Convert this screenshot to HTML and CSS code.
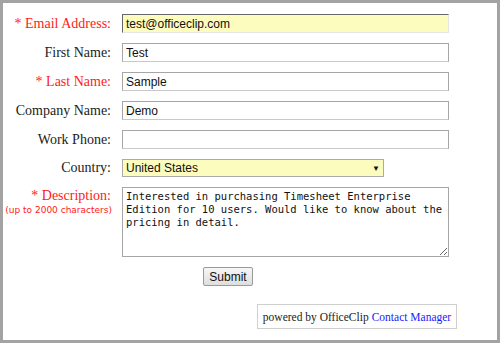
FILE: index.html
```html
<!DOCTYPE html>
<html>
<head>
<meta charset="utf-8">
<link rel="stylesheet" href="styles.css">
</head>
<body>
<div class="frame">
  <form class="form">
    <label class="lbl req">* Email Address:</label>
    <div class="field"><input class="inp yellow" type="text" value="test@officeclip.com"></div>

    <label class="lbl">First Name:</label>
    <div class="field"><input class="inp" type="text" value="Test"></div>

    <label class="lbl req">* Last Name:</label>
    <div class="field"><input class="inp" type="text" value="Sample"></div>

    <label class="lbl">Company Name:</label>
    <div class="field"><input class="inp" type="text" value="Demo"></div>

    <label class="lbl">Work Phone:</label>
    <div class="field"><input class="inp" type="text" value=""></div>

    <label class="lbl">Country:</label>
    <div class="field"><div class="select"><span>United States</span><span class="arrow">▼</span></div></div>

    <div class="lbl req top">* Description:<div class="hint">(up to 2000 characters)</div></div>
    <div class="field"><textarea class="ta">Interested in purchasing Timesheet Enterprise Edition for 10 users. Would like to know about the pricing in detail.</textarea></div>

    <div></div>
    <div class="field"><button type="button" class="btn">Submit</button></div>
  </form>
  <div class="powered-row">
    <div class="powered">powered by OfficeClip <span class="link">Contact Manager</span></div>
  </div>
</div>
</body>
</html>
```
FILE: styles.css
```css
html, body { margin: 0; padding: 0; background: #fff; }
.frame {
  width: 500px; height: 343px; box-sizing: border-box;
  border: 3px solid #a3a3a3;
  padding-top: 11px;
  background: #fff;
}
.form {
  display: grid;
  grid-template-columns: 108px 327px;
  column-gap: 11px;
  row-gap: 10px;
  align-items: center;
}
.lbl {
  font-family: "Liberation Serif", "Times New Roman", serif;
  font-size: 14px;
  color: #222;
  text-align: right;
  white-space: nowrap;
}
.lbl.req { color: #ff1a1a; }
.lbl.top { align-self: start; padding-top: 1px; }
.hint {
  font-family: "DejaVu Sans", Verdana, sans-serif;
  font-size: 9px;
  color: #ff2020;
  margin-top: 1px;
  margin-right: -1px;
}
.field { display: flex; }
.inp {
  width: 327px; height: 19px; box-sizing: border-box;
  border: 1px solid #a6a6a6;
  border-bottom-color: #c8c8c8;
  padding: 0 3px;
  font-family: "Liberation Sans", Arial, sans-serif;
  font-size: 12px;
  color: #111;
  background: #fff;
  outline: none;
}
.inp.yellow {
  background: #fcfcbf;
  border-color: #666 #e6e6e6 #e6e6e6 #666;
}
.select {
  width: 262px; height: 18px; box-sizing: border-box;
  border: 1px solid #aaa;
  background: #fcfcbf;
  display: flex; align-items: center; justify-content: space-between;
  padding: 0 3px 0 3px;
  font-family: "Liberation Sans", Arial, sans-serif;
  font-size: 12px;
  color: #111;
}
.arrow { font-size: 8px; color: #111; }
.ta {
  width: 327px; height: 70px; box-sizing: border-box;
  border: 1px solid #a6a6a6;
  padding: 2px 1px 2px 3px;
  font-family: "DejaVu Sans Mono", "Liberation Mono", monospace;
  font-size: 10.5px;
  line-height: 13px;
  color: #111;
  resize: both;
  overflow: hidden;
  outline: none;
}
.btn {
  margin-left: 81px;
  width: 50px; height: 19px;
  border: 1px solid #9a9a9a;
  border-radius: 2px;
  background: linear-gradient(#f6f6f6, #dedede);
  font-family: "Liberation Sans", Arial, sans-serif;
  font-size: 12px;
  color: #111;
  padding: 0;
}
.powered-row {
  display: flex;
  padding-left: 254px;
  margin-top: 18px;
}
.powered {
  width: 200px; height: 25px; box-sizing: border-box;
  border: 1px solid #cfcfcf;
  display: flex; align-items: center; justify-content: center;
  font-family: "Liberation Serif", "Times New Roman", serif;
  font-size: 11.5px;
  color: #222;
  white-space: nowrap;
}
.link { color: #1a1aff; margin-left: 3px; }
```
